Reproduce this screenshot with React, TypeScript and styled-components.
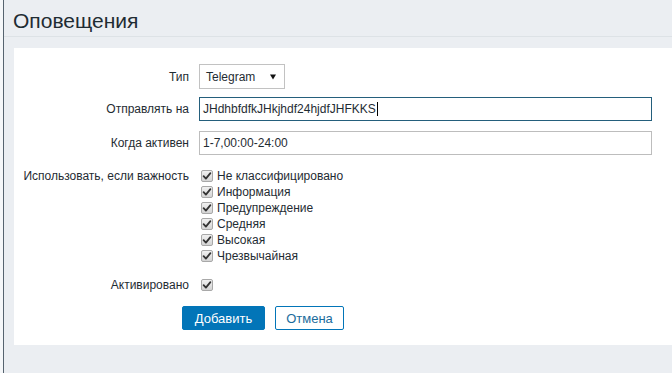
import React from 'react';
import styled, { createGlobalStyle } from 'styled-components';

const GlobalStyle = createGlobalStyle`
    html, body {
        margin: 0;
        padding: 0;
        background: #ebeef2;
        font-family: "Liberation Sans", Arial, sans-serif;
        color: #1f2c33;
    }
`;

const severities = [
    'Не классифицировано',
    'Информация',
    'Предупреждение',
    'Средняя',
    'Высокая',
    'Чрезвычайная',
];

const CheckMark = () => (
    <CheckBox viewBox="0 0 12 12" aria-hidden>
        <defs>
            <linearGradient id="cbg" x1="0" y1="0" x2="0" y2="1">
                <stop offset="0" stopColor="#f2f2f2" />
                <stop offset="1" stopColor="#d2d2d2" />
            </linearGradient>
        </defs>
        <rect x="0.5" y="0.5" width="11" height="11" rx="1.5" fill="url(#cbg)" stroke="#a8a8a8" />
        <path d="M2.6 6.2 L4.9 8.6 L9.4 3.2" fill="none" stroke="#333" strokeWidth="1.8" strokeLinecap="round" strokeLinejoin="round" />
    </CheckBox>
);

export default function App() {
    return (
        <>
            <GlobalStyle />
            <Page>
                <Main>
                    <Header>
                        <Title>Оповещения</Title>
                    </Header>

                    <Panel>
                        <Row>
                            <Label>Тип</Label>
                            <Select>
                                <span>Telegram</span>
                                <svg width="6" height="6" viewBox="0 0 6 6" aria-hidden>
                                    <path d="M0 0.5 H6 L3 5.5 Z" fill="#111" />
                                </svg>
                            </Select>
                        </Row>

                        <Row $mt={8}>
                            <Label>Отправлять на</Label>
                            <TextField $focused>
                                JHdhbfdfkJHkjhdf24hjdfJHFKKS<Caret />
                            </TextField>
                        </Row>

                        <Row $mt={10}>
                            <Label>Когда активен</Label>
                            <TextField>1-7,00:00-24:00</TextField>
                        </Row>

                        <Row $mt={13} $align="start">
                            <Label $line>Использовать, если важность</Label>
                            <CheckList>
                                {severities.map((s) => (
                                    <CheckItem key={s}>
                                        <CheckMark />
                                        {s}
                                    </CheckItem>
                                ))}
                            </CheckList>
                        </Row>

                        <Row $mt={13}>
                            <Label $line>Активировано</Label>
                            <CheckItem>
                                <CheckMark />
                            </CheckItem>
                        </Row>

                        <ButtonRow>
                            <PrimaryButton>Добавить</PrimaryButton>
                            <SecondaryButton>Отмена</SecondaryButton>
                        </ButtonRow>
                    </Panel>
                </Main>
            </Page>
        </>
    );
}

const Page = styled.div`
    min-height: 100vh;
    border-left: 3px solid #f5f7f9;
    display: flex;
`;

const Main = styled.div`
    flex: 1;
    border-left: 1px solid #56636f;
    min-height: 100vh;
    box-sizing: border-box;
`;

const Header = styled.div`
    height: 37px;
    padding: 10px 0 0 9px;
    box-sizing: border-box;
    border-bottom: 1px solid #dde2e6;
`;

const Title = styled.h1`
    margin: 0;
    font-size: 21px;
    line-height: 21px;
    font-weight: normal;
    color: #1f2c33;
`;

const Panel = styled.div`
    margin: 11px 0 0 10px;
    background: #fff;
    padding: 16px 0 15px;
`;

const Row = styled.div<{ $mt?: number; $align?: string }>`
    display: grid;
    grid-template-columns: 175px 453px;
    column-gap: 10px;
    align-items: ${(p) => p.$align || 'center'};
    margin-top: ${(p) => p.$mt || 0}px;
`;

const Label = styled.div<{ $line?: boolean }>`
    text-align: right;
    font-size: 12px;
    line-height: ${(p) => (p.$line ? '16px' : '14px')};
    color: #1f2c33;
`;

const Select = styled.div`
    width: 86px;
    height: 25px;
    box-sizing: border-box;
    border: 1px solid #c2c2c2;
    display: flex;
    align-items: center;
    justify-content: space-between;
    padding: 0 8px 0 6px;
    font-size: 12px;
    background: #fff;
`;

const TextField = styled.div<{ $focused?: boolean }>`
    height: 24px;
    box-sizing: border-box;
    border: 1px solid ${(p) => (p.$focused ? '#245f7c' : '#bdbdbd')};
    display: flex;
    align-items: center;
    padding: 0 3px;
    font-size: 12px;
    background: #fff;
    color: #1f2c33;
`;

const Caret = styled.span`
    display: inline-block;
    width: 1px;
    height: 14px;
    background: #000;
    margin-left: 1px;
`;

const CheckList = styled.div`
    display: flex;
    flex-direction: column;
`;

const CheckItem = styled.div`
    display: flex;
    align-items: center;
    gap: 4px;
    height: 16px;
    font-size: 12px;
    line-height: 16px;
    padding-left: 2px;
`;

const CheckBox = styled.svg`
    width: 12px;
    height: 12px;
    flex: none;
`;

const ButtonRow = styled.div`
    display: flex;
    gap: 10px;
    padding-left: 168px;
    margin-top: 13px;
`;

const PrimaryButton = styled.button`
    height: 24px;
    width: 83px;
    border: 1px solid #0275b8;
    background: #0275b8;
    color: #fff;
    border-radius: 2px;
    font-family: "Liberation Sans", Arial, sans-serif;
    font-size: 13px;
    padding: 0;
`;

const SecondaryButton = styled.button`
    height: 24px;
    width: 69px;
    border: 1px solid #0275b8;
    background: #fff;
    color: #1b6c9c;
    border-radius: 2px;
    font-family: "Liberation Sans", Arial, sans-serif;
    font-size: 13px;
    padding: 0;
`;
